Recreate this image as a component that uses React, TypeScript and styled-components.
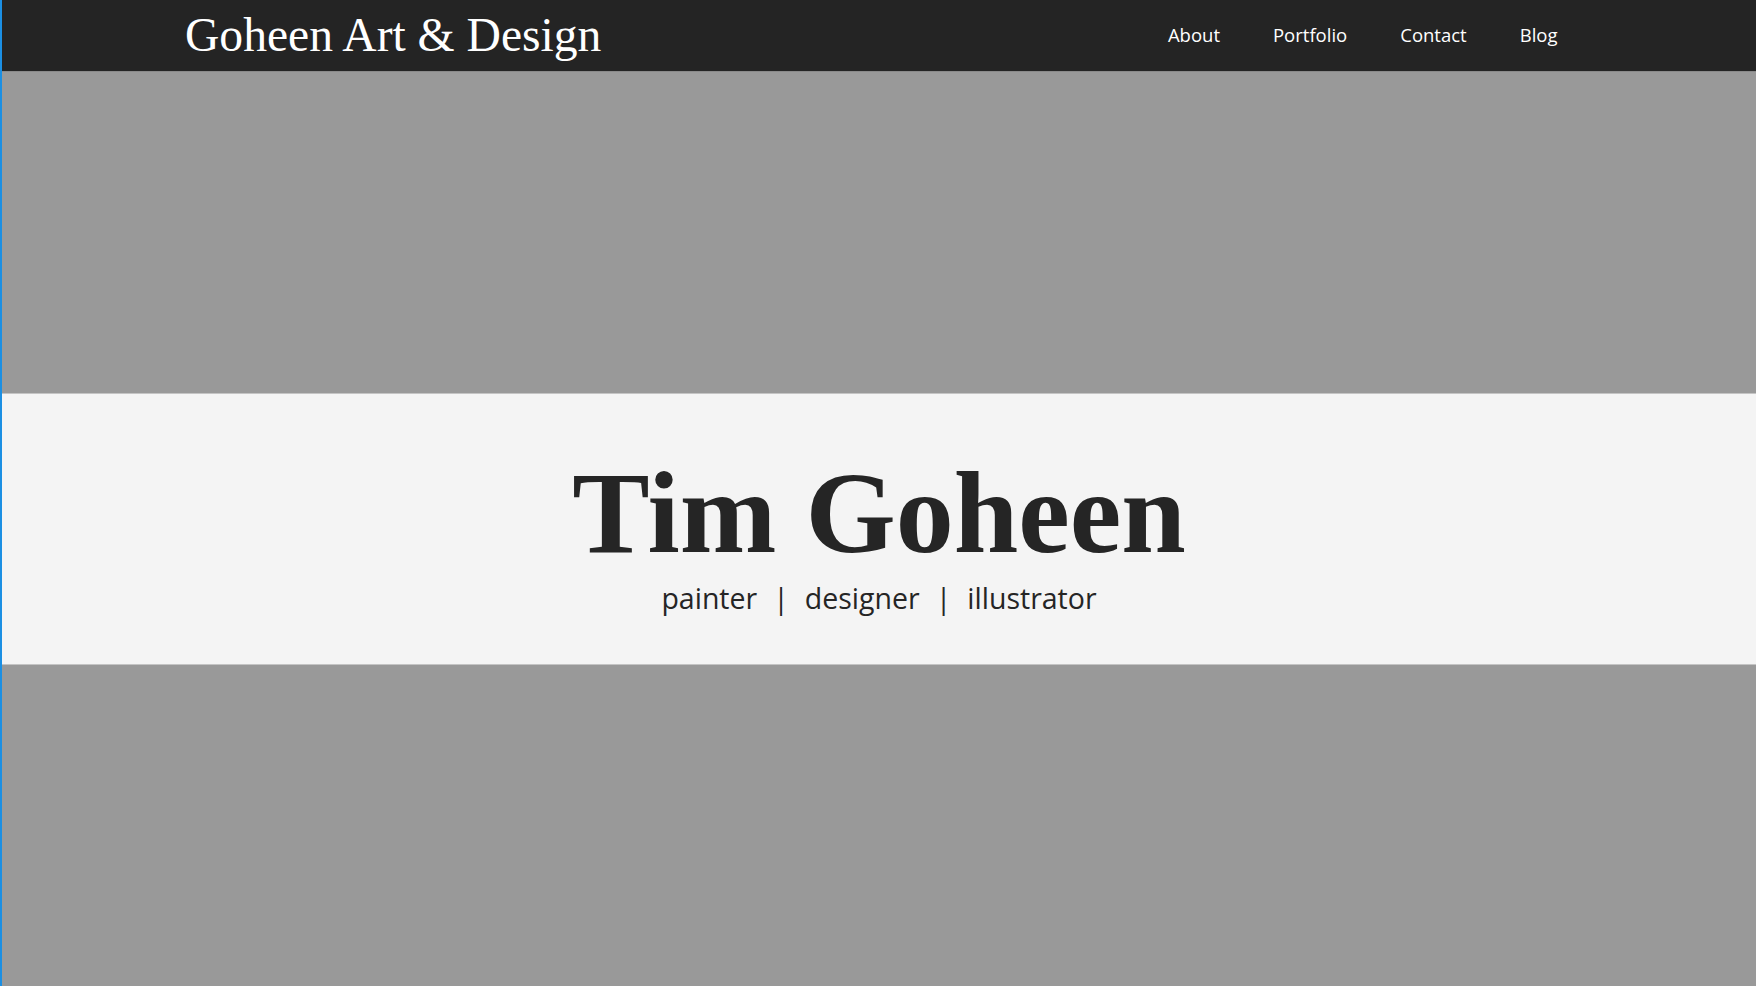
import React from "react";
import styled, { createGlobalStyle } from "styled-components";

const GlobalStyle = createGlobalStyle`
  html, body { margin: 0; padding: 0; height: 100%; }
  body { background: #999999; font-family: "Open Sans", "Noto Sans", sans-serif; }
  #root { min-height: 100vh; }
  * { box-sizing: border-box; }
`;

const Page = styled.div`
  min-height: 100vh;
  display: flex;
  flex-direction: column;
  border-left: 2px solid #1b8fe3;
  background: #999999;
`;

const Header = styled.header`
  height: 72px;
  background: #242424;
  border-bottom: 1px solid #8a8a8a;
  display: flex;
  align-items: center;
  justify-content: space-between;
  padding: 0 172px 0 183px;
`;

const Logo = styled.a`
  font-family: "Liberation Serif", "Times New Roman", serif;
  font-size: 47.6px;
  color: #ffffff;
  text-decoration: none;
  margin-top: -2px;
`;

const Nav = styled.nav`
  display: flex;
  align-items: center;
  margin-top: -2px;
`;

const NavLink = styled.a`
  font-family: "Open Sans", "Noto Sans", sans-serif;
  font-size: 18.5px;
  color: #ffffff;
  text-decoration: none;
  padding: 0 26.5px;
`;

const Hero = styled.main`
  flex: 1;
  display: flex;
  flex-direction: column;
  justify-content: center;
  background: #999999;
`;

const Band = styled.section`
  height: 272px;
  background: #f4f4f4;
  border-top: 1px solid #c4c4c4;
  border-bottom: 1px solid #c4c4c4;
  display: flex;
  flex-direction: column;
  align-items: center;
  padding-top: 61px;
  color: #252525;
`;

const Title = styled.h1`
  margin: 0;
  font-family: "Liberation Serif", "Times New Roman", serif;
  font-weight: 700;
  font-size: 116px;
  line-height: 1;
`;

const Subtitle = styled.p`
  margin: 10px 0 0;
  display: flex;
  gap: 16px;
  font-family: "Open Sans", "Noto Sans", sans-serif;
  font-size: 28.5px;
  line-height: 1.2;
`;

const Sep = styled.span`
  font-weight: 400;
`;

export default function App() {
  const roles = ["painter", "designer", "illustrator"];
  return (
    <>
      <GlobalStyle />
      <Page>
        <Header>
          <Logo href="#">Goheen Art &amp; Design</Logo>
          <Nav>
            <NavLink href="#">About</NavLink>
            <NavLink href="#">Portfolio</NavLink>
            <NavLink href="#">Contact</NavLink>
            <NavLink href="#">Blog</NavLink>
          </Nav>
        </Header>
        <Hero>
          <Band>
            <Title>Tim Goheen</Title>
            <Subtitle>
              {roles.map((r, i) => (
                <React.Fragment key={r}>
                  {i > 0 && <Sep>|</Sep>}
                  <span>{r}</span>
                </React.Fragment>
              ))}
            </Subtitle>
          </Band>
        </Hero>
      </Page>
    </>
  );
}
